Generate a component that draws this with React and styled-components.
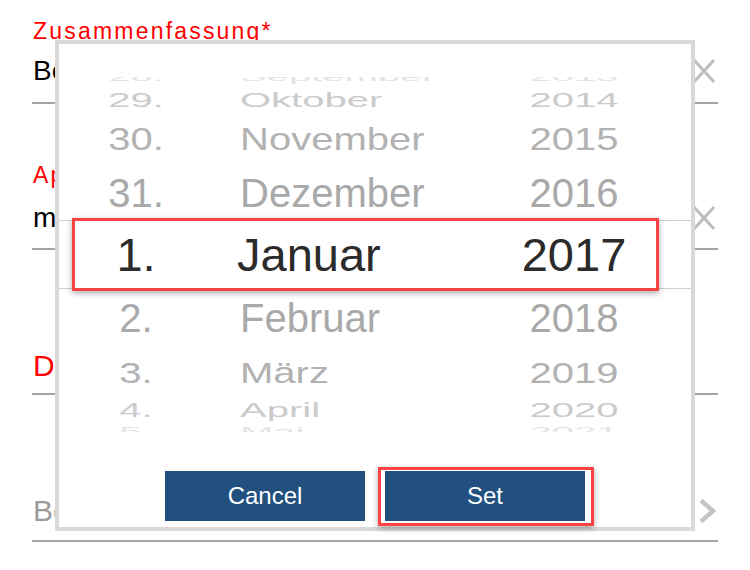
import styled, { createGlobalStyle } from 'styled-components';

const GlobalStyle = createGlobalStyle`
  html, body {
    margin: 0;
    padding: 0;
    background: #fff;
  }
  body {
    font-family: "Liberation Sans", Arial, sans-serif;
  }
`;

const Page = styled.div`
  position: relative;
  width: 750px;
  height: 570px;
  overflow: hidden;
  background: #fff;
`;

const Form = styled.div`
  display: flex;
  flex-direction: column;
  width: 686px;
  padding: 20px 0 0 32px;
`;

const Field = styled.div`
  display: flex;
  flex-direction: column;
  margin-top: ${(p) => p.$top || 0}px;
  padding-bottom: ${(p) => p.$bottom}px;
  border-bottom: 2px solid #a3a3a3;
`;

const Label = styled.div`
  padding-left: 1px;
  color: #ff0000;
  font-size: ${(p) => (p.$big ? 30 : 23)}px;
  line-height: ${(p) => (p.$big ? 30 : 23)}px;
  letter-spacing: ${(p) => (p.$big ? 0 : 2.2)}px;
  white-space: nowrap;
`;

const ValueRow = styled.div`
  display: flex;
  align-items: center;
  justify-content: space-between;
  height: 30px;
  margin-top: ${(p) => p.$top}px;
  padding-left: 1px;
`;

const Value = styled.span`
  color: ${(p) => (p.$muted ? '#9b9b9b' : '#000')};
  font-size: ${(p) => (p.$muted ? 30 : 28)}px;
  line-height: 30px;
  white-space: nowrap;
`;

const IconSlot = styled.span`
  display: flex;
  margin-right: ${(p) => p.$right || 2}px;
`;

const ClearIcon = () => (
  <svg width="24" height="26" viewBox="0 0 24 26">
    <path d="M2 2 L22 24 M22 2 L2 24" stroke="#bdbdbd" strokeWidth="3" fill="none" />
  </svg>
);

const ChevronIcon = () => (
  <svg width="18" height="26" viewBox="0 0 18 26">
    <path d="M3 2.5 L15 13 L3 23.5" stroke="#c4c4c4" strokeWidth="4.5" fill="none" />
  </svg>
);

const Dialog = styled.div`
  position: absolute;
  left: 55px;
  top: 40px;
  width: 640px;
  height: 491px;
  box-sizing: border-box;
  border: 4px solid #d9d9d7;
  background: #fff;
  padding-top: 33px;
  display: flex;
  flex-direction: column;
`;

const Wheel = styled.div`
  display: flex;
  flex-direction: column;
  overflow: hidden;
`;

const WheelRow = styled.div`
  display: flex;
  align-items: center;
  flex: none;
  box-sizing: border-box;
  height: ${(p) => p.$h}px;
  color: ${(p) => p.$color};
  font-size: ${(p) => (p.$selected ? 47 : 40)}px;
  border-top: ${(p) => (p.$selected ? '1px solid #cfcfcf' : 'none')};
  border-bottom: ${(p) => (p.$selected ? '1px solid #cfcfcf' : 'none')};
`;

const Cell = styled.span`
  display: block;
  flex: none;
  box-sizing: border-box;
  width: ${(p) => p.$w}px;
  padding-left: ${(p) => p.$pl || 0}px;
  text-align: ${(p) => p.$align};
  line-height: 1;
  white-space: nowrap;
  transform: translateY(${(p) => p.$dy || 0}px) scaleY(${(p) => p.$scale});
`;

const Footer = styled.div`
  display: flex;
  justify-content: center;
  gap: 20px;
  margin-top: 39px;
`;

const Button = styled.button`
  width: 200px;
  height: 50px;
  border: none;
  border-radius: 0;
  background: #21507f;
  color: #fff;
  font-family: "Liberation Sans", Arial, sans-serif;
  font-size: 24px;
  padding: 0;
`;

const Highlight = styled.div`
  position: absolute;
  left: ${(p) => p.$x}px;
  top: ${(p) => p.$y}px;
  width: ${(p) => p.$w}px;
  height: ${(p) => p.$h}px;
  box-sizing: border-box;
  border: 3px solid #fa4343;
  box-shadow: 0 2px 6px rgba(0, 0, 0, 0.35);
  pointer-events: none;
`;

const rows = [
  { d: '28.', m: 'September', y: '2013', h: 10, s: 0.3, dy: -5, c: '#e4e4e4' },
  { d: '29.', m: 'Oktober', y: '2014', h: 25, s: 0.52, c: '#cbcbcb' },
  { d: '30.', m: 'November', y: '2015', h: 53, s: 0.8, c: '#b2b2b2' },
  { d: '31.', m: 'Dezember', y: '2016', h: 55, s: 1, c: '#a9a9a9' },
  { d: '1.', m: 'Januar', y: '2017', h: 69, s: 1, c: '#2b2b2b', selected: true },
  { d: '2.', m: 'Februar', y: '2018', h: 57, s: 1, c: '#a9a9a9' },
  { d: '3.', m: 'März', y: '2019', h: 53, s: 0.73, c: '#b2b2b2' },
  { d: '4.', m: 'April', y: '2020', h: 22, s: 0.49, c: '#cbcbcb' },
  { d: '5.', m: 'Mai', y: '2021', h: 11, s: 0.3, dy: 5, c: '#e4e4e4' },
];

const App = () => {
  return (
    <Page>
      <GlobalStyle />
      <Form>
        <Field $bottom={16}>
          <Label>Zusammenfassung*</Label>
          <ValueRow $top={13}>
            <Value>Bestellung</Value>
            <IconSlot><ClearIcon /></IconSlot>
          </ValueRow>
        </Field>
        <Field $top={60} $bottom={15}>
          <Label>Applikation*</Label>
          <ValueRow $top={16}>
            <Value>mobile App</Value>
            <IconSlot><ClearIcon /></IconSlot>
          </ValueRow>
        </Field>
        <Field $top={101} $bottom={12}>
          <Label $big>Datum*</Label>
        </Field>
        <Field $top={101} $bottom={14}>
          <ValueRow $top={0}>
            <Value $muted>Beschreibung</Value>
            <IconSlot $right={0}><ChevronIcon /></IconSlot>
          </ValueRow>
        </Field>
      </Form>

      <Dialog>
        <Wheel>
          {rows.map((r) => (
            <WheelRow key={r.d} $h={r.h} $color={r.c} $selected={r.selected}>
              <Cell $w={154} $align="center" $scale={r.s} $dy={r.dy}>{r.d}</Cell>
              <Cell $w={281} $pl={r.selected ? 24 : 27} $align="left" $scale={r.s} $dy={r.dy}>{r.m}</Cell>
              <Cell $w={160} $align="center" $scale={r.s} $dy={r.dy}>{r.y}</Cell>
            </WheelRow>
          ))}
        </Wheel>
        <Footer>
          <Button>Cancel</Button>
          <Button>Set</Button>
        </Footer>
        <Highlight $x={13} $y={174} $w={587} $h={73} />
        <Highlight $x={319} $y={423} $w={216} $h={59} />
      </Dialog>
    </Page>
  );
};

export default App;
